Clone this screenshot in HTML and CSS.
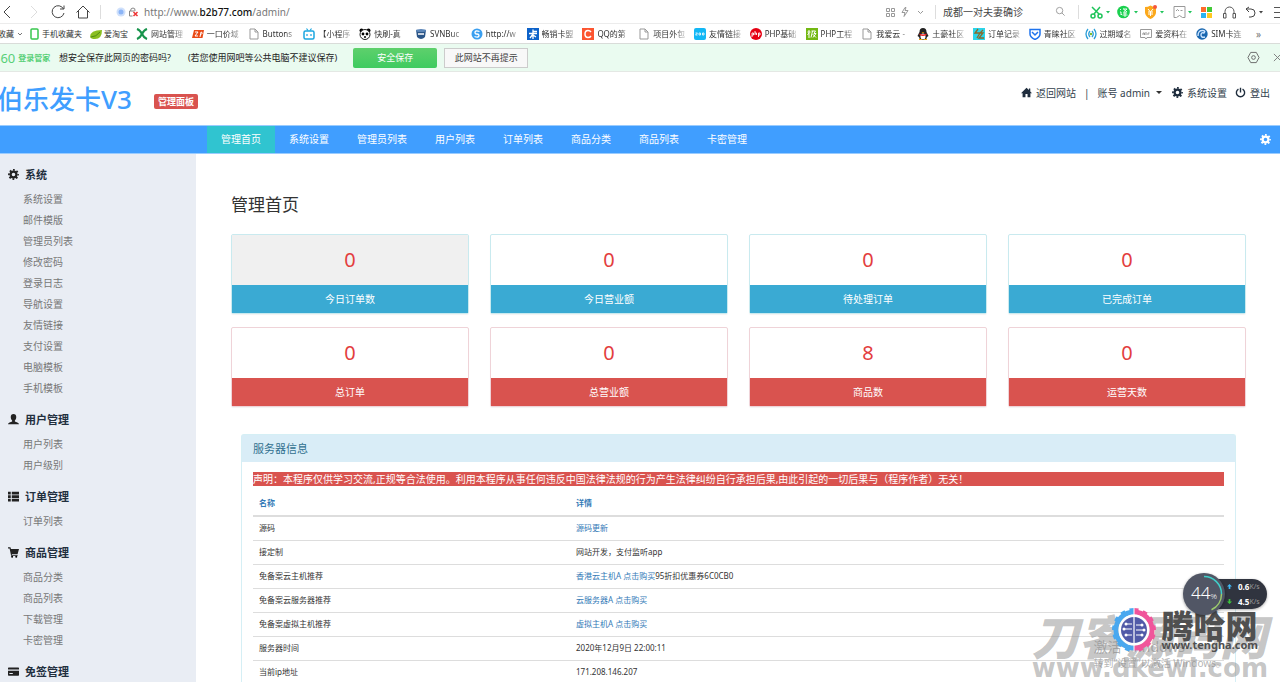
FILE: index.html
```html
<!DOCTYPE html>
<html lang="zh-CN">
<head>
<meta charset="utf-8">
<title>管理首页</title>
<link rel="stylesheet" href="styles.css">
</head>
<body>
<svg class="sprite" aria-hidden="true">
  <symbol id="gear" viewBox="0 0 16 16"><circle cx="8" cy="8" r="4.2" fill="none" stroke="currentColor" stroke-width="3.2"/><circle cx="8" cy="8" r="6.6" fill="none" stroke="currentColor" stroke-width="2.6" pathLength="16" stroke-dasharray="1 1" stroke-dashoffset=".5"/></symbol>
  <symbol id="home" viewBox="0 0 16 16"><path fill="currentColor" d="M8 1 0 9h2.300v6H6.500v-5h3v5h4.200V9H16l-2.500-2.600V2h-2v2.400z"/></symbol>
  <symbol id="power" viewBox="0 0 16 16"><path d="M5 3a6 6 0 1 0 6 0M8 1v7" fill="none" stroke="currentColor" stroke-width="2"/></symbol>
  <symbol id="user" viewBox="0 0 16 16"><path fill="currentColor" d="M8 0c2.600 0 4 1.800 4 4.300 0 2-.7 3.900-2 5v1.500c2 .9 6 1.700 6 4.200H0c0-2.500 4-3.300 6-4.200V9.300c-1.300-1.100-2-3-2-5C4 1.800 5.400 0 8 0z"/></symbol>
  <symbol id="list" viewBox="0 0 16 16"><path fill="currentColor" d="M0 1h4v4H0zM5.500 1H16v4H5.500zM0 6.200h4v4H0zM5.500 6.200H16v4H5.500zM0 11.400h4v4H0zM5.500 11.400H16v4H5.500z"/></symbol>
  <symbol id="cart" viewBox="0 0 16 16"><path fill="currentColor" d="M0 .5h3.500L4.300 3H16l-2 7H5.500l.3 1.200H14v1.500H4.500L2.300 2H0z"/><circle cx="6" cy="14.300" r="1.500"/><circle cx="12" cy="14.300" r="1.500"/></symbol>
  <symbol id="card" viewBox="0 0 16 16"><path fill="currentColor" d="M1 2h14q1 0 1 1v2H0V3q0-1 1-1zM0 7h16v6q0 1-1 1H1q-1 0-1-1zm2 3v1.500h5V10z" fill-rule="evenodd"/></symbol>
  <symbol id="doc" viewBox="0 0 12 12"><path d="M2 1h5l3 3v7H2zM7 1v3h3" fill="none" stroke="#999"/></symbol>
</svg>

<div class="shell">
  <header class="browser">
    <div class="toolbar">
      <button class="tool" aria-label="后退"><svg viewBox="0 0 16 16"><path d="M10 2 4 8l6 6"/></svg></button>
      <button class="tool faint" aria-label="前进"><svg viewBox="0 0 16 16"><path d="m6 2 6 6-6 6"/></svg></button>
      <button class="tool" aria-label="刷新"><svg viewBox="0 0 16 16"><path d="M13.500 5A6 6 0 1 0 14 9M14 1.500V5h-4"/></svg></button>
      <button class="tool" aria-label="主页"><svg viewBox="0 0 16 16"><path d="M1.500 8.500 8 2l6.500 6.500M3.500 7v7h9V7"/></svg></button>
      <i class="rule"></i>
      <svg class="badge" viewBox="0 0 22 10"><circle cx="5" cy="5" r="4.500" fill="#cfe0fb"/><circle cx="5" cy="5" r="2.500" fill="#8cb5f7"/><path d="M13.500 9V4h5M14.500 4q0-3 2.500-3t2 3M13.500 9h3" fill="none" stroke="#888"/><path d="m17.500 5 4 4m0-4-4 4" stroke="#e33" stroke-width="1.500"/></svg>
      <div class="url">http://www.<b>b2b77.com</b>/admin/</div>
      <svg class="extras" viewBox="0 0 40 12"><g fill="none" stroke="#999"><path d="M1.500 2.500h3v3h-3zM6.500 2.500h3v3h-3zM1.500 7.500h3v3h-3zM6.500 7.500h3v3h-3zM20 1.500l-3 5h3l-1 4 4-6h-3l1-3zM33 5l2.500 2.500L38 5"/></g></svg>
      <i class="rule"></i>
      <input class="search" type="text" aria-label="搜索" placeholder="成都一对夫妻确诊">
      <svg class="mag" viewBox="0 0 12 12"><circle cx="5" cy="5" r="3.500"/><path d="m7.500 7.500 3 3"/></svg>
      <i class="rule"></i>
      <div class="plugins">
        <svg viewBox="0 0 22 14"><g fill="none" stroke="#1fc45a" stroke-width="1.500"><circle cx="4" cy="11" r="2"/><circle cx="11" cy="11" r="2"/><path d="m5 9 6-7M10 9 3 2"/></g><path d="m17 6 4 0-2 2.500z" fill="#1fc45a"/></svg>
        <svg viewBox="0 0 22 14"><circle cx="6.500" cy="7" r="6.300" fill="#1bd04f"/><path d="M3 4l1 1M3 7h1v3l1-1M6 4h4L6.500 7M6.500 4l3.500 3M6 8h4M5.500 10h5M8 6.500V12" fill="none" stroke="#fff" stroke-width=".9"/><path d="m17 6 4 0-2 2.500z" fill="#1fc45a"/></svg>
        <svg viewBox="0 0 22 14"><path d="M0 2q3 0 5.500-1.500Q8 2 11 2v6q-1 4-5.500 6Q1 12 0 8z" fill="#fba81c"/><path d="m3 4 2.500 3L8 4M3 7h5M3 9h5M5.500 7v4" fill="none" stroke="#fff"/><circle cx="10" cy="2" r="2" fill="#f5563c"/><path d="m15 6 4 0-2 2.500z" fill="#1fc45a"/></svg>
        <svg viewBox="0 0 22 14"><path d="M1 1.500h11v11H9.500l-3-2-3 2H1zM3 6l1.500-1.500L6 6M7.500 5.500h2" fill="none" stroke="#999"/><path d="m15 6 4 0-2 2.500z" fill="#1fc45a"/></svg>
        <svg class="plain" viewBox="0 0 16 14"><path d="M0 2h5v5H0z" fill="#ff6b2c"/><path d="M6 2h5v5H6z" fill="#42c936"/><path d="M0 8h5v5H0z" fill="#29b3f3"/><path d="M6 8h5v5H6z" fill="#ffc81f"/></svg>
        <svg class="plain" viewBox="0 0 16 14"><path d="M2 9V6.500a4.500 4.500 0 0 1 9 0V9M.5 8.500H3V13H.5zM10 8.500h2.500V13H10z" fill="none" stroke="#555"/></svg>
        <svg viewBox="0 0 22 14"><path d="M4 2 1 4l3 3M1 4h5q4 0 4 4t-4 4H4" fill="none" stroke="#444"/><path d="m14 6 4 0-2 2.500z" fill="#444"/></svg>
        <svg class="menu" viewBox="0 0 7 14"><path d="M1 2.500h6M1 7.500h6M1 12.500h6" stroke="#555"/></svg>
      </div>
    </div>
    <nav class="bookmarks" aria-label="收藏">
      <button class="fav">收藏 <svg viewBox="0 0 6 6"><path d="m1 2 2 2 2-2" fill="none" stroke="#777"/></svg></button>
      <a class="mark phone" href="#"><svg viewBox="0 0 12 12"><rect x="1" y="1" width="7" height="10" rx="1" fill="none" stroke="#38c64e" stroke-width="1.500"/></svg><span>手机收藏夹</span></a>
      <a class="mark short" href="#"><svg viewBox="0 0 12 12"><path d="M0 9Q0 2 12 2q0 9-7 9-4 0-5-2z" fill="#8bbf21"/><path d="M1 9q5 0 9-5" stroke="#4d8a14" fill="none"/></svg><span>爱淘宝</span></a>
      <a class="mark" href="#"><svg viewBox="0 0 12 12"><path d="M1 1q3 1 5 5t5 5M11 1Q8 2 6 6t-5 5" fill="none" stroke="#18944c" stroke-width="2.200"/></svg><span>网站管理</span></a>
      <a class="mark" href="#"><svg viewBox="0 0 12 12"><path d="M2 2h10l-1.500 8H0z" fill="#e94b17"/><path d="M3 4h3L3 8h3M8 9l1-5q3 1-1 3" fill="none" stroke="#fff"/></svg><span>一口价域</span></a>
      <a class="mark" href="#"><svg><use href="#doc"/></svg><span>Buttons</span></a>
      <a class="mark" href="#"><svg viewBox="0 0 12 12"><rect x="1" y="3" width="10" height="8" rx="1.500" fill="none" stroke="#1ba6e0" stroke-width="1.500"/><path d="m3.500.5 1.500 2M8.500.5 7 2.500M4 6v2M8 6v2" stroke="#1ba6e0" stroke-width="1.200"/></svg><span>【小程序</span></a>
      <a class="mark" href="#"><svg viewBox="0 0 12 12"><circle cx="2.500" cy="2.500" r="2"/><circle cx="9.500" cy="2.500" r="2"/><circle cx="6" cy="6.500" r="5" fill="#fff" stroke="#222"/><circle cx="4" cy="6" r="1.400"/><circle cx="8" cy="6" r="1.400"/><circle cx="6" cy="9" r="1"/></svg><span>快刷-真</span></a>
      <a class="mark" href="#"><svg viewBox="0 0 12 12"><path d="M1 2h10l-1 7q-4 4-8 0z" fill="#2c5688"/><ellipse cx="6" cy="2.500" rx="5" ry="1.500" fill="#5c86b8"/><path d="M3 6h6" stroke="#fff" stroke-width="1.500"/></svg><span>SVNBuc</span></a>
      <a class="mark" href="#"><svg viewBox="0 0 12 12"><circle cx="6" cy="6" r="5.500" fill="#3a9ff0"/><path d="M8.500 3.500Q4 2 4 4.500q0 1.500 2 1.500t2 1.500Q8 10 3.500 8.500" fill="none" stroke="#fff" stroke-width="1.300"/></svg><span>http://w</span></a>
      <a class="mark" href="#"><svg viewBox="0 0 12 12"><path d="M0 0h12v12H0z" fill="#0d62c9"/><path d="M6 1.500V11M6 3.500h4M2 5.500h8M6 7l3 2M3 10l3-4" fill="none" stroke="#fff" stroke-width="1.300"/></svg><span>畅销卡盟</span></a>
      <a class="mark" href="#"><svg viewBox="0 0 12 12"><path d="M0 0h12v12H0z" fill="#fc5531"/><path d="M9 4Q8 2.500 6 2.500 3 2.500 3 6t3 3.500Q8 9.500 9 8" fill="none" stroke="#fff" stroke-width="1.500"/></svg><span>QQ的第</span></a>
      <a class="mark" href="#"><svg><use href="#doc"/></svg><span>项目外包</span></a>
      <a class="mark" href="#"><svg viewBox="0 0 12 12"><rect width="12" height="12" rx="2" fill="#12b7f5"/><path d="M1.500 5h2l-2 2h2M5 5v2h1.500V5zM8.500 5v2H10V5z" fill="none" stroke="#fff" stroke-width=".8"/></svg><span>友情链接</span></a>
      <a class="mark" href="#"><svg viewBox="0 0 12 12"><circle cx="6" cy="6" r="6" fill="#e60012"/><path d="M2 9V5h1.500v2H2M5 3v4M5 5h1.500v2M8.500 9V5H10v2H8.500" fill="none" stroke="#fff" stroke-width=".9"/></svg><span>PHP基础</span></a>
      <a class="mark" href="#"><svg viewBox="0 0 12 12"><path d="M0 0h12v12H0z" fill="#73b812"/><path d="M1.500 4h3M3 2v8M3 5 1.500 7M5.500 3h4L8 5.500h2L7 9.500M6.500 3 5 9.500M6.500 6 10 9.500" fill="none" stroke="#fff"/></svg><span>PHP工程</span></a>
      <a class="mark" href="#"><svg><use href="#doc"/></svg><span>我爱云 -</span></a>
      <a class="mark" href="#"><svg viewBox="0 0 12 12"><path d="M6 0q3.500 0 3.500 4l2 4-1.500 1-1 3H3L2 9 .5 8l2-4Q2.500 0 6 0z" fill="#222"/><ellipse cx="6" cy="8.500" rx="2.500" ry="3" fill="#fff"/><path d="M2.500 5.500q3.500 2 7 0v1.500q-3.500 2-7 0z" fill="#e22"/><path d="M2 11h3v1H2zM7 11h3v1H7zM4.500 4h3L6 5z" fill="#f7a600"/></svg><span>土豪社区</span></a>
      <a class="mark" href="#"><svg viewBox="0 0 12 12"><path d="M0 0h12v12H0z" fill="#2bd5ea"/><path d="M5 1 2 5h5L4 10M10 2 7 5h3L6 10h5" fill="none" stroke="#8a6a2b" stroke-width="1.300"/></svg><span>订单记录</span></a>
      <a class="mark" href="#"><svg viewBox="0 0 12 12"><path d="M1 1.500h10V6q0 3-5 5.500Q1 9 1 6z" fill="none" stroke="#1f74ee" stroke-width="1.500"/><path d="m3 4 3 3 3-3" fill="none" stroke="#1f74ee" stroke-width="1.500"/></svg><span>青睐社区</span></a>
      <a class="mark" href="#"><svg viewBox="0 0 12 12"><path d="M3 1Q-1 6 3 11M5 3Q2.500 6 5 9M9 1q4 5 0 10M7 3q2.500 3 0 6" fill="none" stroke="#2a9ed8" stroke-width="1.300"/><circle cx="6" cy="6" r="1.200" fill="#7dbb29"/></svg><span>过期域名</span></a>
      <a class="mark" href="#"><svg viewBox="0 0 12 12"><path d="M.5 1.500h11v8H7L6 11 5 9.500H.5zM3 7V5h1.500v2M6 4v3M8 7V5h1.500" fill="none" stroke="#999"/></svg><span>爱资料在</span></a>
      <a class="mark" href="#"><svg viewBox="0 0 12 12"><circle cx="6" cy="6" r="5.700" fill="#1b68b0"/><path d="M2 8q0-6 5-5.500Q10 3 8 5 5 4 5 7q0 3 4 2" fill="none" stroke="#cfe6ff" stroke-width="1.400"/></svg><span>SIM卡连</span></a>
      <button class="more" aria-label="更多">»</button>
    </nav>
    <div class="savebar">
      <strong class="brand360"><span>360</span> 登录管家</strong>
      <span>想安全保存此网页的密码吗?</span>
      <span class="hint">(若您使用网吧等公共电脑不建议保存)</span>
      <button class="save">安全保存</button>
      <button class="never">此网站不再提示</button>
      <svg class="hex" viewBox="0 0 14 14"><path d="M4 1.500h6L13 7l-3 5.500H4L1 7z"/><circle cx="7" cy="7" r="2"/></svg>
      <svg class="close" viewBox="0 0 10 10"><path d="m1 1 8 8m0-8-8 8"/></svg>
    </div>
  </header>

  <div class="masthead">
    <div class="logo">伯乐发卡V3</div>
    <span class="label">管理面板</span>
    <div class="account">
      <a href="#"><svg><use href="#home"/></svg>返回网站</a>
      <span class="bar">|</span>
      <a href="#">账号 admin <i class="caret"></i></a>
      <a href="#"><svg><use href="#gear"/></svg>系统设置</a>
      <a href="#"><svg><use href="#power"/></svg>登出</a>
    </div>
  </div>

  <nav class="mainnav">
    <a class="active" href="#">管理首页</a><a href="#">系统设置</a><a href="#">管理员列表</a><a href="#">用户列表</a><a href="#">订单列表</a><a href="#">商品分类</a><a href="#">商品列表</a><a href="#">卡密管理</a>
    <button class="cog" aria-label="设置"><svg><use href="#gear"/></svg></button>
  </nav>

  <div class="body">
    <aside class="sidebar">
      <h2><svg><use href="#gear"/></svg>系统</h2>
      <ul><li><a href="#">系统设置</a></li><li><a href="#">邮件模版</a></li><li><a href="#">管理员列表</a></li><li><a href="#">修改密码</a></li><li><a href="#">登录日志</a></li><li><a href="#">导航设置</a></li><li><a href="#">友情链接</a></li><li><a href="#">支付设置</a></li><li><a href="#">电脑模板</a></li><li><a href="#">手机模板</a></li></ul>
      <h2><svg><use href="#user"/></svg>用户管理</h2>
      <ul><li><a href="#">用户列表</a></li><li><a href="#">用户级别</a></li></ul>
      <h2><svg><use href="#list"/></svg>订单管理</h2>
      <ul><li><a href="#">订单列表</a></li></ul>
      <h2><svg><use href="#cart"/></svg>商品管理</h2>
      <ul><li><a href="#">商品分类</a></li><li><a href="#">商品列表</a></li><li><a href="#">下载管理</a></li><li><a href="#">卡密管理</a></li></ul>
      <h2><svg><use href="#card"/></svg>免签管理</h2>
    </aside>

    <main class="content">
      <h1>管理首页</h1>
      <div class="stats">
        <section class="stat info hovered"><b>0</b><p>今日订单数</p></section>
        <section class="stat info"><b>0</b><p>今日营业额</p></section>
        <section class="stat info"><b>0</b><p>待处理订单</p></section>
        <section class="stat info"><b>0</b><p>已完成订单</p></section>
        <section class="stat danger"><b>0</b><p>总订单</p></section>
        <section class="stat danger"><b>0</b><p>总营业额</p></section>
        <section class="stat danger"><b>8</b><p>商品数</p></section>
        <section class="stat danger"><b>0</b><p>运营天数</p></section>
      </div>
      <section class="panel">
        <h3>服务器信息</h3>
        <div class="panel-body">
          <p class="notice">声明：本程序仅供学习交流,正规等合法使用。利用本程序从事任何违反中国法律法规的行为产生法律纠纷自行承担后果,由此引起的一切后果与（程序作者）无关！</p>
          <table>
            <thead><tr><th>名称</th><th>详情</th></tr></thead>
            <tbody>
              <tr><td>源码</td><td><a href="#">源码更新</a></td></tr>
              <tr><td>接定制</td><td>网站开发，支付监听app</td></tr>
              <tr><td>免备案云主机推荐</td><td><a href="#">香港云主机A 点击购买</a>95折扣优惠券6C0CB0</td></tr>
              <tr><td>免备案云服务器推荐</td><td><a href="#">云服务器A 点击购买</a></td></tr>
              <tr><td>免备案虚拟主机推荐</td><td><a href="#">虚拟主机A 点击购买</a></td></tr>
              <tr><td>服务器时间</td><td>2020年12月9日 22:00:11</td></tr>
              <tr><td>当前ip地址</td><td>171.208.146.207</td></tr>
            </tbody>
          </table>
        </div>
      </section>
    </main>
  </div>

  <div class="mark-dk"><span class="dk-name">刀客源码网</span><span class="dk-url">www.dkewl.com</span></div>
  <div class="activate"><span class="act-big">激活 Windows</span><span>转到“设置”以激活 Windows。</span></div>
  <div class="tengha">
    <svg viewBox="0 0 44 44">
      <path d="M22 4a18 18 0 0 0 0 36" fill="none" stroke="#4aa8ef" stroke-width="5"/>
      <path d="M22 4a18 18 0 0 1 0 36" fill="none" stroke="#f0559b" stroke-width="5"/>
      <path d="M22 1.500a20.500 20.500 0 0 0 0 41" fill="none" stroke="#4aa8ef" stroke-width="3" pathLength="14" stroke-dasharray="1 1"/>
      <path d="M22 1.500a20.500 20.500 0 0 1 0 41" fill="none" stroke="#f0559b" stroke-width="3" pathLength="14" stroke-dasharray="1 1"/>
      <circle cx="22" cy="22" r="15.500" fill="#fff"/>
      <circle cx="22" cy="22" r="13" fill="#515aa8"/>
      <path d="M22 8v28M14 16h6M12 21h8M14 27h6M24 17h6M24 22h8M24 27h6" stroke="#fff" stroke-width="1.200"/>
      <g fill="#fff"><circle cx="14" cy="16" r="1.500"/><circle cx="12" cy="21" r="1.500"/><circle cx="14" cy="27" r="1.500"/><circle cx="30" cy="17" r="1.500"/><circle cx="32" cy="22" r="1.500"/><circle cx="30" cy="27" r="1.500"/></g>
      <path d="M22 0v7M22 37v7" stroke="#fff"/>
    </svg>
    <div><span class="th-name">腾哈网</span><span class="th-url">www.tengha.com</span></div>
  </div>
  <div class="meter">
    <div class="dial"><svg viewBox="0 0 42 42"><path d="M21 3.500a17.500 17.500 0 0 1 17.500 17.500" stroke="#40cfc9"/><path d="M38.500 21a17.500 17.500 0 0 1-10 15.800" stroke="#9ccb6c"/></svg><span>44<small>%</small></span></div>
    <div class="rates">
      <span><svg viewBox="0 0 6 6"><path d="M3 0 0 3h2v3h2V3h2z" fill="#40b8f5"/></svg><b>0.6</b><small>K/s</small></span>
      <span><svg viewBox="0 0 6 6"><path d="M3 6 0 3h2V0h2v3h2z" fill="#3cc43c"/></svg><b>4.5</b><small>K/s</small></span>
    </div>
  </div>
</div>
</body>
</html>
```
FILE: styles.css
```css
* { box-sizing: border-box; }
body, h1, h2, h3, p, ul { margin: 0; padding: 0; }
body {
  font-family: "Noto Sans", "Noto Sans CJK SC", sans-serif;
  font-size: 10px;
  line-height: 14px;
  color: #333;
  background: #fff;
}
a { color: inherit; text-decoration: none; }
ul { list-style: none; }
button { font: inherit; color: inherit; background: none; border: 0; padding: 0; }
svg { flex: none; }
.sprite { position: absolute; width: 0; height: 0; }
.shell { position: relative; display: flex; flex-direction: column; height: 100vh; overflow: hidden; }

/* browser chrome */
.toolbar { display: flex; align-items: center; height: 24px; border-bottom: 1px solid #ececec; }
.tool { width: 25px; height: 16px; }
.tool svg { display: block; width: 16px; height: 16px; fill: none; stroke: #444; }
.tool.faint svg { stroke: #ddd; }
.rule { width: 1px; height: 14px; background: #ddd; }
.badge { width: 24px; height: 10px; margin-left: 14px; }
.url { flex: 1; margin-left: 5px; color: #777; white-space: nowrap; }
.url b { font-weight: 500; color: #111; }
.extras { width: 40px; height: 12px; margin-right: 10px; }
.search { width: 112px; margin-left: 7px; padding: 0; border: 0; outline: 0; font: inherit; color: #444; }
.search::placeholder { color: #444; }
.mag { width: 11px; height: 11px; margin-right: 12px; fill: none; stroke: #999; }
.plugins { display: flex; gap: 6px; margin-left: 10px; }
.plugins svg { width: 22px; height: 14px; }
.plugins .plain { width: 16px; }
.plugins .menu { width: 7px; }

.bookmarks { display: flex; align-items: center; height: 20px; border-bottom: 1px solid #d9dcd9; font-size: 8px; color: #333; }
.fav { width: 32px; margin-left: -2px; white-space: nowrap; text-align: left; }
.fav svg { width: 6px; height: 6px; margin-left: 1px; }
.mark { display: flex; align-items: center; gap: 3px; flex: 1 1 0; min-width: 0; white-space: nowrap; }
.mark svg { width: 12px; height: 12px; }
.mark span { overflow: hidden; width: 36px; -webkit-mask-image: linear-gradient(90deg, #000 60%, transparent); mask-image: linear-gradient(90deg, #000 60%, transparent); }
.mark.phone { flex: 0 0 60px; gap: 0; }
.mark.short { flex: 0 0 46px; gap: 2px; }
.mark.phone span, .mark.short span { width: auto; -webkit-mask-image: none; mask-image: none; }
.more { width: 28px; text-align: left; padding-left: 4px; color: #777; font-size: 10px; }

.savebar { display: flex; align-items: center; height: 28px; background: #eafbf0; border-bottom: 1px solid #e4e8e4; font-size: 9px; color: #222; white-space: nowrap; }
.brand360 { display: flex; align-items: center; gap: 3px; width: 59px; margin-left: -7px; margin-right: 7px; color: #58d077; font-size: 8px; }
.brand360 span { font-size: 13px; font-weight: 400; }
.hint { margin-left: 17px; }
.save { width: 84px; height: 20px; margin-left: 16px; border-radius: 2px; background: linear-gradient(#5ed06c, #3ecb60); color: #fff; }
.never { width: 84px; height: 20px; margin-left: 7px; border: 1px solid #ccc; background: #f8f8f8; color: #444; }
.hex { width: 13px; height: 13px; margin-left: auto; fill: none; stroke: #666; }
.close { width: 9px; height: 9px; margin: 0 -2px 0 13px; fill: none; stroke: #777; }

/* site header */
.masthead { display: flex; align-items: center; height: 53px; flex: none; white-space: nowrap; }
.logo { width: 136px; margin-left: -3px; font-size: 26px; line-height: 32px; font-weight: 500; color: #409eff; }
.label { align-self: center; margin: 6px 0 0 21px; padding: 0 4px; border-radius: 2px; background: #d9534f; color: #fff; font-size: 9px; font-weight: 700; line-height: 15px; }
.account { display: flex; align-items: center; gap: 8px; margin: 0 10px 12px auto; color: #333f4d; }
.account a { display: flex; align-items: center; }
.account svg { width: 11px; height: 11px; margin-right: 4px; color: #1f2d3d; }
.caret { margin: 0 2px 0 6px; border: 3px solid transparent; border-top-color: #333; border-bottom: 0; }

.mainnav { display: flex; align-items: stretch; flex: none; height: 29px; padding-left: 207px; background: #409eff; border-top: 1px solid #9accff; border-bottom: 1px solid #9accff; color: #fff; }
.mainnav a { padding: 6px 14px 7px; }
.mainnav .active { background: #30c4d0; }
.cog { margin-left: auto; padding-right: 9px; }
.cog svg { display: block; width: 11px; height: 11px; }

/* layout */
.body { display: flex; flex: 1; min-height: 0; }
.sidebar { flex: 0 0 196px; padding: 10px 0 0 8px; background: #e9edf4; overflow: hidden; }
.sidebar h2 { display: flex; align-items: center; gap: 6px; font-size: 11px; line-height: 21px; color: #222f3e; }
.sidebar h2 svg { width: 11px; height: 11px; color: #222; }
.sidebar ul { padding: 4px 0 10px 15px; color: #777; }
.sidebar li { line-height: 21px; }
.content { display: flex; flex-direction: column; flex: 1; min-width: 0; padding: 39px 34px 0 35px; }
h1 { font-size: 17px; line-height: 24px; font-weight: 400; }
.stats { display: grid; grid-template-columns: repeat(4, 1fr); gap: 13px 21px; margin-top: 17px; }
.stat { border: 1px solid #c9eaef; border-radius: 2px; text-align: center; box-shadow: 0 1px 1px #0000000d; }
.stat b { display: block; font-size: 20px; line-height: 50px; font-weight: 400; color: #e33e3e; }
.stat p { padding: 7px 0; color: #fff; }
.stat.info p { background: #3aaad3; }
.stat.danger { border-color: #efd3d8; }
.stat.danger p { background: #d9534f; }
.stat.hovered b { background: #f0f0f0; }

.panel { flex: 1; min-height: 0; margin: 27px 10px 0; border: 1px solid #d5eff5; border-radius: 3px 3px 0 0; border-bottom: 0; }
.panel h3 { padding: 0 11px; line-height: 27px; font-size: 11px; font-weight: 400; color: #31708f; background: #d9edf7; }
.panel-body { padding: 10px 11px 0; }
.notice { background: #d9534f; color: #fff; white-space: nowrap; overflow: hidden; }
table { width: 100%; border-collapse: collapse; table-layout: fixed; font-size: 8px; line-height: 11px; }
th, td { padding: 5px 6px 6px; text-align: left; height: 24px; border-bottom: 1px solid #ddd; }
th { width: 317px; height: 30px; padding-top: 9px; color: #337ab7; border-bottom: 2px solid #ddd; }
th + th { width: auto; }
td a { color: #337ab7; }

/* floating marks over the page */
.mark-dk { position: absolute; right: 12px; bottom: 2px; display: flex; flex-direction: column; align-items: flex-start; color: #8888887d; white-space: nowrap; }
.dk-name { font-family: "Noto Sans CJK SC", sans-serif; font-weight: 900; font-style: italic; font-size: 47px; line-height: 42px; }
.dk-url { font-family: "DejaVu Sans", sans-serif; font-weight: 700; font-size: 26px; line-height: 24px; }
.activate { position: absolute; right: 54px; bottom: 12px; display: flex; flex-direction: column; color: #8f8f8fb0; white-space: nowrap; }
.act-big { font-size: 14px; line-height: 18px; }
.tengha { position: absolute; right: 22px; bottom: 30px; display: flex; align-items: center; gap: 6px; white-space: nowrap; }
.tengha > svg { width: 44px; height: 44px; }
.tengha div { display: flex; flex-direction: column; color: #505050; }
.th-name { font-family: "Noto Sans CJK SC", sans-serif; font-weight: 900; font-size: 32px; line-height: 30px; }
.th-url { font-weight: 700; font-size: 11px; line-height: 12px; }
.meter { position: absolute; right: 13px; bottom: 67px; display: flex; align-items: center; color: #fff; }
.dial { position: relative; width: 42px; height: 42px; border-radius: 50%; background: #515665; display: flex; align-items: center; justify-content: center; box-shadow: 0 1px 3px #0006; z-index: 1; }
.dial svg { position: absolute; inset: 0; fill: none; stroke-width: 1.5; }
.dial span { font-size: 17px; font-weight: 300; }
.dial small { font-size: 8px; }
.rates { display: flex; flex-direction: column; width: 56px; margin-left: -14px; padding: 0 4px 0 14px; border-radius: 0 15px 15px 0; background: #30343f; font-size: 8px; line-height: 15px; box-shadow: 0 1px 3px #0005; }
.rates span { display: flex; align-items: center; }
.rates svg { width: 5px; height: 5px; margin: 0 6px 0 2px; }
.rates small { font-size: 7px; color: #999; }
```
